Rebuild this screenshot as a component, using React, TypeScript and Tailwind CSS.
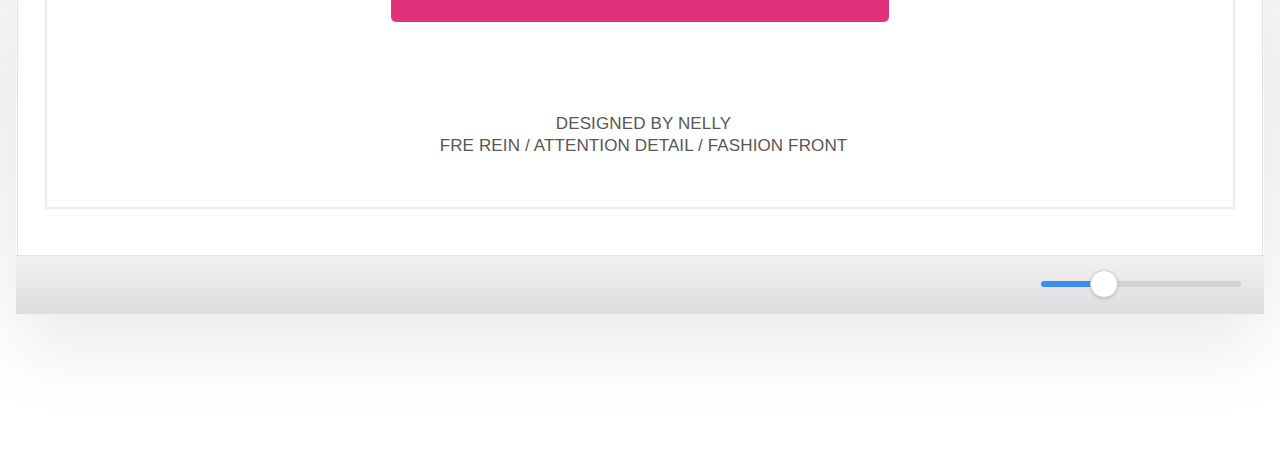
export default function App() {
  return (
    <div className="relative h-[451px] w-[1280px] overflow-hidden bg-white font-['Liberation_Sans',Arial,sans-serif]">
      <div className="h-[340px] bg-gradient-to-b from-[#f3f3f3] to-white px-[16px]">
        <div className="flex flex-col shadow-[0_40px_70px_rgba(0,0,0,0.075)]">
          {/* content area */}
          <div className="mx-[1px] h-[255px] border-x border-[#e4e4e4] bg-white px-[27px]">
            <div className="flex h-[209px] flex-col items-center border-x-2 border-b-2 border-[#ececec]">
              <div className="h-[22px] w-[498px] rounded-b-[5px] bg-[#e2317b]" />
              <div className="mt-[91px] pl-[7px] text-center text-[17px] leading-[22px] tracking-[0.13px] text-[#575757]">
                <div>DESIGNED BY NELLY</div>
                <div>FRE REIN / ATTENTION DETAIL / FASHION FRONT</div>
              </div>
            </div>
          </div>
          {/* toolbar */}
          <div className="flex h-[59px] items-center justify-end border-t border-[#e2e2e2] bg-gradient-to-b from-[#f2f1f2] to-[#dddcde] pb-[2px] pr-[23px]">
            <div className="relative h-[6px] w-[200px] rounded-full bg-[#d3d3d3]">
              <div className="absolute left-0 top-0 h-[6px] w-[62px] rounded-full bg-[#3a8ef0]" />
              <div className="absolute left-[49px] top-[-11px] h-[28px] w-[28px] rounded-full border border-[#d0d0d0] bg-white shadow-[0_1px_3px_rgba(0,0,0,0.18)]" />
            </div>
          </div>
        </div>
      </div>
    </div>
  );
}
